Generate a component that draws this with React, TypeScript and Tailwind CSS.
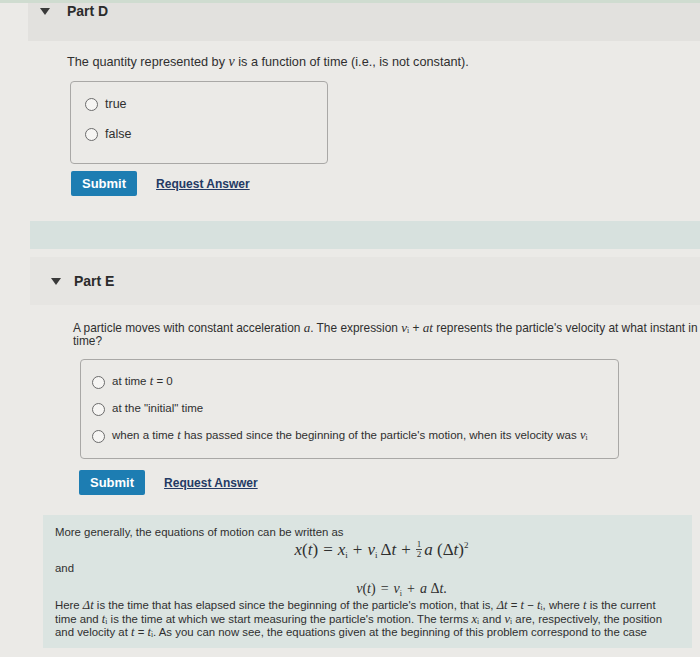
import React from 'react';

const V = ({ children }: { children: React.ReactNode }) => (
  <span className="font-['Liberation_Serif',serif] italic text-[1.1em] leading-none">{children}</span>
);

const Sub = ({ base, sub }: { base: string; sub: string }) => (
  <span className="font-['Liberation_Serif',serif] text-[1.1em] leading-none">
    <i>{base}</i>
    <span className="text-[0.6em] relative top-[1px] leading-none">{sub}</span>
  </span>
);

const Op = ({ children }: { children: React.ReactNode }) => (
  <span className="mx-[5px] not-italic">{children}</span>
);

const Radio = ({ children }: { children: React.ReactNode }) => (
  <div className="flex items-center gap-[7px] h-[16px]">
    <span className="w-[13px] h-[13px] rounded-full border border-[#6b6b6b] bg-[#f6f5f3] shrink-0" />
    <span>{children}</span>
  </div>
);

const Triangle = () => (
  <svg width="10" height="7" viewBox="0 0 10 7" className="shrink-0">
    <path d="M0 0 L10 0 L5 7 Z" fill="#3a3a3a" />
  </svg>
);

const Actions = () => (
  <div className="flex items-center gap-[19px]">
    <button className="h-[25px] px-[11px] bg-[#1d7db2] text-white font-bold text-[13px] rounded-[2px]">
      Submit
    </button>
    <a className="text-[#243a64] underline font-bold text-[12px]">Request Answer</a>
  </div>
);

export default function App() {
  return (
    <div className="w-[700px] h-[657px] overflow-hidden bg-[#ebeae7] text-[#2f2f2f] text-[12.7px] font-['Liberation_Sans',Arial,sans-serif]">
      <div className="h-[3px] bg-[#cfdcd0]" />
      {/* Part D */}
      <div className="h-[38px] bg-[#e2e1de] ml-[28px] flex items-start gap-[17px] pl-[12px]">
        <div className="pt-[5px]"><Triangle /></div>
        <span className="text-[14px] font-semibold text-[#2b2b2b] leading-[16px]">Part D</span>
      </div>
      <div className="pl-[67px] pt-[13px]">
        <p className="leading-[16px]">
          The quantity represented by <V>v</V> is a function of time (i.e., is not constant).
        </p>
        <div className="ml-[3px] mt-[11px] w-[258px] h-[83px] border border-[#a9a8a6] rounded-[4px] pl-[14px] pt-[14px] flex flex-col gap-[14px] text-[12.5px]">
          <Radio>true</Radio>
          <Radio>false</Radio>
        </div>
        <div className="ml-[4px] mt-[7px]">
          <Actions />
        </div>
      </div>
      <div className="ml-[30px] mt-[25px] h-[28px] bg-[#d7e1de]" />
      {/* Part E */}
      <div className="ml-[30px] mt-[8px] h-[48px] bg-[#e6e5e2] flex items-center gap-[13px] pl-[21px]">
        <Triangle />
        <span className="text-[14px] font-semibold text-[#2b2b2b]">Part E</span>
      </div>
      <div className="pl-[73px] pr-[2px] pt-[16px]">
        <p className="leading-[13px] text-[11.9px]">
          A particle moves with constant acceleration <V>a</V>. The expression <Sub base="v" sub="i" /> + <V>at</V> represents the particle's velocity at what instant in time?
        </p>
        <div className="ml-[7px] mt-[11px] w-[539px] h-[100px] border border-[#a9a8a6] rounded-[4px] pl-[11px] pt-[14px] flex flex-col gap-[11px] text-[11.5px]">
          <Radio>
            at time <V>t</V> = 0
          </Radio>
          <Radio>at the "initial" time</Radio>
          <Radio>
            when a time <V>t</V> has passed since the beginning of the particle's motion, when its velocity was <Sub base="v" sub="i" />
          </Radio>
        </div>
        <div className="ml-[6px] mt-[11px]">
          <Actions />
        </div>
      </div>
      {/* Hint */}
      <div className="ml-[43px] mt-[20px] w-[649px] h-[133px] bg-[#dbe4e1] pl-[12px] pr-[14px] pt-[11px] text-[11.4px] leading-[13.5px]">
        <p>More generally, the equations of motion can be written as</p>
        <div className="h-[20px] flex items-center justify-center pl-[30px] font-['Liberation_Serif',serif] text-[17px] leading-none">
          <span>
            <i>x</i>(<i>t</i>)<Op>=</Op><i>x</i><span className="text-[9px] relative top-[3px]">i</span><Op>+</Op><i>v</i><span className="text-[9px] relative top-[3px] mr-[3px]">i</span>Δ<i>t</i><Op>+</Op>
          </span>
          <span className="inline-flex flex-col items-center text-[9px] leading-[9px] mr-[2px]">
            <span>1</span>
            <span className="border-t border-[#444] px-[1px]">2</span>
          </span>
          <span>
            <i>a</i> (Δ<i>t</i>)<span className="text-[9px] relative -top-[7px]">2</span>
          </span>
        </div>
        <p className="mt-[2px]">and</p>
        <div className="h-[16px] mt-[6px] flex items-center justify-center pl-[70px] font-['Liberation_Serif',serif] text-[14px] leading-none">
          <span>
            <i>v</i>(<i>t</i>)<Op>=</Op><i>v</i><span className="text-[8px] relative top-[3px]">i</span><Op>+</Op><i>a</i> Δ<i>t</i>.
          </span>
        </div>
        <p className="mt-[2px]">
          Here <V>Δt</V> is the time that has elapsed since the beginning of the particle's motion, that is, <V>Δt</V> = <V>t</V> − <Sub base="t" sub="i" />, where <V>t</V> is the current time and <Sub base="t" sub="i" /> is the time at which we start measuring the particle's motion. The terms <Sub base="x" sub="i" /> and <Sub base="v" sub="i" /> are, respectively, the position and velocity at <V>t</V> = <Sub base="t" sub="i" />. As you can now see, the equations given at the beginning of this problem correspond to the case
        </p>
      </div>
    </div>
  );
}
